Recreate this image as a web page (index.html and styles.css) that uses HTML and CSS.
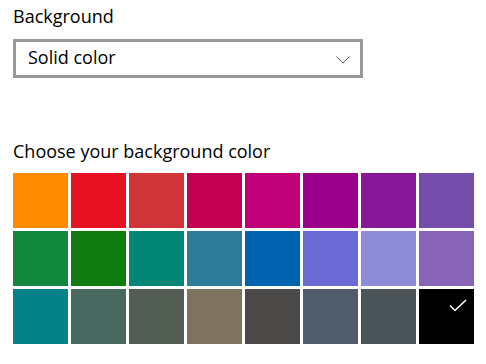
FILE: index.html
```html
<!DOCTYPE html>
<html lang="en">
<head>
  <meta charset="UTF-8" />
  <title>Background</title>
  <link rel="stylesheet" href="styles.css">
</head>
<body>
  <div class="label">Background</div>
  <div class="dropdown">
    <span class="dropdown-value">Solid color</span>
    <svg class="chevron" width="14" height="8" viewBox="0 0 14 8">
      <path d="M0.5 0.5 L7 7 L13.5 0.5" fill="none" stroke="#555" stroke-width="1"/>
    </svg>
  </div>

  <div class="label section-title">Choose your background color</div>
  <div class="swatches">
    <div class="swatch" style="background:#ff8c00"></div>
    <div class="swatch" style="background:#e81123"></div>
    <div class="swatch" style="background:#d13438"></div>
    <div class="swatch" style="background:#c30052"></div>
    <div class="swatch" style="background:#bf0077"></div>
    <div class="swatch" style="background:#9a0089"></div>
    <div class="swatch" style="background:#881798"></div>
    <div class="swatch" style="background:#744da9"></div>

    <div class="swatch" style="background:#10893e"></div>
    <div class="swatch" style="background:#107c10"></div>
    <div class="swatch" style="background:#018574"></div>
    <div class="swatch" style="background:#2d7d9a"></div>
    <div class="swatch" style="background:#0063b1"></div>
    <div class="swatch" style="background:#6b69d6"></div>
    <div class="swatch" style="background:#8e8cd8"></div>
    <div class="swatch" style="background:#8764b8"></div>

    <div class="swatch" style="background:#038387"></div>
    <div class="swatch" style="background:#486860"></div>
    <div class="swatch" style="background:#525e54"></div>
    <div class="swatch" style="background:#7e735f"></div>
    <div class="swatch" style="background:#4c4a48"></div>
    <div class="swatch" style="background:#515c6b"></div>
    <div class="swatch" style="background:#4a5459"></div>
    <div class="swatch selected" style="background:#000000">
      <svg class="check" width="18" height="13" viewBox="0 0 18 13">
        <path d="M1 6.5 L6 11.5 L17 1" fill="none" stroke="#fff" stroke-width="1.6"/>
      </svg>
    </div>
  </div>
</body>
</html>
```

FILE: styles.css
```css
body {
  margin: 0;
  padding: 4px 13px 0;
  background-color: #ffffff;
  color: #000000;
  font-family: "Open Sans", "Noto Sans", sans-serif;
  font-size: 18px;
}

.label {
  line-height: 24px;
}

.dropdown {
  margin-top: 11px;
  width: 322px;
  height: 33px;
  border: 3px solid #999999;
  display: flex;
  align-items: center;
  justify-content: space-between;
  padding: 0 10px 0 12px;
}

.dropdown-value {
  line-height: 30px;
  padding-bottom: 3px;
}

.chevron {
  display: block;
  margin-top: 2px;
}

.section-title {
  margin-top: 61px;
}

.swatches {
  margin-top: 10px;
  display: grid;
  grid-template-columns: repeat(8, 55px);
  grid-auto-rows: 55px;
  gap: 3px;
}

.swatch {
  position: relative;
}

.check {
  position: absolute;
  top: 10px;
  right: 7px;
}
```
